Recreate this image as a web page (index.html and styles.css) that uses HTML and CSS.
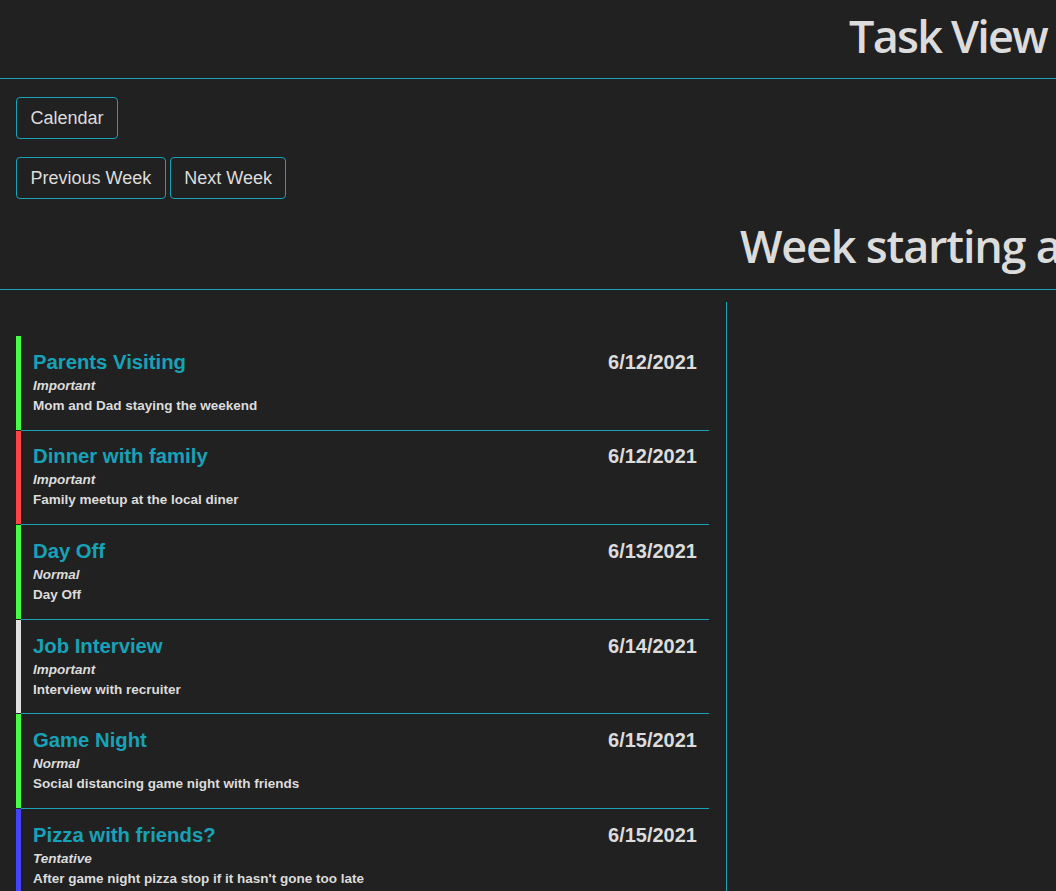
FILE: index.html
```html
<!DOCTYPE html>
<html lang="en">
<head>
<meta charset="utf-8">
<title>Task View</title>
<link rel="stylesheet" href="styles.css">
</head>
<body>
<div class="page">
  <header class="site-header">
    <h1 class="page-title">Task View</h1>
  </header>
  <div class="toolbar">
    <div class="btn-row">
      <button class="btn">Calendar</button>
    </div>
    <div class="btn-row">
      <button class="btn">Previous Week</button>
      <button class="btn">Next Week</button>
    </div>
  </div>
  <div class="week-head">
    <h2 class="week-title">Week starting at 6/12/2021</h2>
  </div>
  <div class="columns">
    <section class="task-col">
      <div class="task c-green">
        <div class="task-main">
          <div class="task-title">Parents Visiting</div>
          <div class="task-priority">Important</div>
          <div class="task-desc">Mom and Dad staying the weekend</div>
        </div>
        <div class="task-date">6/12/2021</div>
      </div>
      <div class="divider"></div>
      <div class="task c-red">
        <div class="task-main">
          <div class="task-title">Dinner with family</div>
          <div class="task-priority">Important</div>
          <div class="task-desc">Family meetup at the local diner</div>
        </div>
        <div class="task-date">6/12/2021</div>
      </div>
      <div class="divider"></div>
      <div class="task c-green">
        <div class="task-main">
          <div class="task-title">Day Off</div>
          <div class="task-priority">Normal</div>
          <div class="task-desc">Day Off</div>
        </div>
        <div class="task-date">6/13/2021</div>
      </div>
      <div class="divider"></div>
      <div class="task c-grey">
        <div class="task-main">
          <div class="task-title">Job Interview</div>
          <div class="task-priority">Important</div>
          <div class="task-desc">Interview with recruiter</div>
        </div>
        <div class="task-date">6/14/2021</div>
      </div>
      <div class="divider"></div>
      <div class="task c-green">
        <div class="task-main">
          <div class="task-title">Game Night</div>
          <div class="task-priority">Normal</div>
          <div class="task-desc">Social distancing game night with friends</div>
        </div>
        <div class="task-date">6/15/2021</div>
      </div>
      <div class="divider"></div>
      <div class="task c-blue">
        <div class="task-main">
          <div class="task-title">Pizza with friends?</div>
          <div class="task-priority">Tentative</div>
          <div class="task-desc">After game night pizza stop if it hasn't gone too late</div>
        </div>
        <div class="task-date">6/15/2021</div>
      </div>
      <div class="divider"></div>
    </section>
  </div>
</div>
</body>
</html>
```

FILE: styles.css
```css
html, body {
  margin: 0;
  padding: 0;
  background: #212121;
  overflow: hidden;
}
body {
  color: #dcdcdc;
  font-family: "Liberation Sans", Arial, sans-serif;
}
.page {
  width: 1056px;
}
.site-header {
  height: 79px;
  border-bottom: 1px solid #17a2b8;
  box-sizing: border-box;
}
.page-title {
  margin: 0;
  padding: 6px 9px 0 0;
  text-align: right;
  font-family: "Open Sans", "Noto Sans", sans-serif;
  font-weight: 600;
  font-size: 45px;
  line-height: 60px;
  letter-spacing: -1.8px;
  color: #dcdcdc;
}
.toolbar {
  padding: 18px 16px 0;
  display: flex;
  flex-direction: column;
  gap: 18px;
}
.btn-row {
  display: flex;
  gap: 4px;
}
.btn {
  font-family: "Liberation Sans", Arial, sans-serif;
  font-size: 18px;
  line-height: 24px;
  padding: 8px 13.5px;
  color: #dcdcdc;
  background: transparent;
  border: 1px solid #17a2b8;
  border-radius: 4px;
}
.week-head {
  height: 91px;
  border-bottom: 1px solid #17a2b8;
  box-sizing: border-box;
  overflow: hidden;
}
.week-title {
  margin: 0;
  padding: 17px 0 0 740px;
  white-space: nowrap;
  font-family: "Open Sans", "Noto Sans", sans-serif;
  font-weight: 600;
  font-size: 45px;
  line-height: 60px;
  letter-spacing: -1.2px;
  color: #dcdcdc;
}
.columns {
  display: flex;
  margin-top: 12px;
}
.task-col {
  width: 727px;
  box-sizing: border-box;
  padding: 34px 17px 0 16px;
  border-right: 1px solid #17a2b8;
  min-height: 700px;
}
.task {
  display: flex;
  justify-content: space-between;
  border-left: 5px solid #44ff44;
  padding: 13.8px 12px 13.8px 12px;
}
.c-green { border-left-color: #44ff44; }
.c-red { border-left-color: #ff4444; }
.c-grey { border-left-color: #e0e0e0; }
.c-blue { border-left-color: #4444ff; }
.divider {
  height: 1px;
  margin-left: 5px;
  background: #17a2b8;
}
.task-title {
  font-size: 20.3px;
  line-height: 24px;
  font-weight: 700;
  color: #17a2b8;
  margin-bottom: 2px;
}
.task-priority {
  font-size: 13.5px;
  line-height: 20px;
  font-weight: 700;
  font-style: italic;
}
.task-desc {
  font-size: 13.5px;
  line-height: 20px;
  font-weight: 700;
}
.task-date {
  font-size: 20px;
  line-height: 24px;
  font-weight: 700;
  color: #dcdcdc;
}
```
